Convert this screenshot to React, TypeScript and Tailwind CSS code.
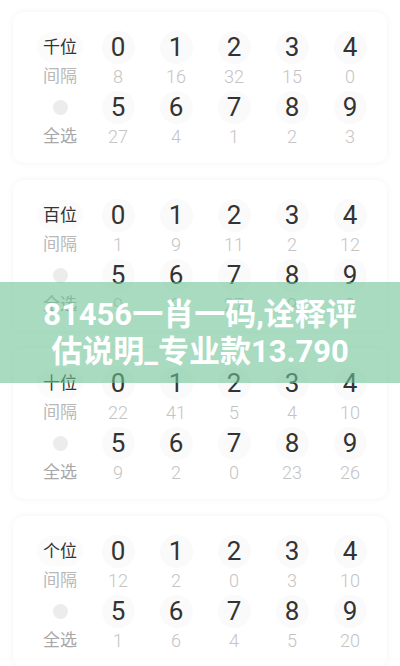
const cards = [
  { label: "千位", top: [8, 16, 32, 15, 0], bottom: [27, 4, 1, 2, 3] },
  { label: "百位", top: [1, 9, 11, 2, 12], bottom: [9, 2, 27, 9, 0] },
  { label: "十位", top: [22, 41, 5, 4, 10], bottom: [9, 2, 0, 23, 26] },
  { label: "个位", top: [12, 2, 0, 3, 10], bottom: [1, 6, 4, 5, 20] },
];

function Digit({ n }: { n: number }) {
  return (
    <div className="flex h-[30px] items-center justify-center">
      <span className="flex h-[33px] w-[33px] items-center justify-center rounded-full bg-[#fafafa] text-[26px] leading-none text-[#333]">
        {n}
      </span>
    </div>
  );
}

function Gap({ v }: { v: number }) {
  return (
    <div className="flex h-[30px] items-center justify-center text-[18px] font-light leading-none text-[#c4c4c4]">
      {v}
    </div>
  );
}

function Card({ label, top, bottom }: { label: string; top: number[]; bottom: number[] }) {
  return (
    <div className="h-[151px] rounded-[10px] bg-white pl-[18px] pr-[8px] pt-[20px] shadow-[0_0_6px_rgba(0,0,0,0.05)]">
      <div className="grid grid-cols-[58px_repeat(5,58px)]">
        <div className="flex h-[30px] items-center justify-center">
          <span className="rounded-full bg-[#fbfbfb] px-[6px] text-[17px] leading-[30px] text-[#333]">{label}</span>
        </div>
        {[0, 1, 2, 3, 4].map((n) => (
          <Digit key={n} n={n} />
        ))}
        <div className="flex h-[30px] items-center justify-center text-[17px] text-[#b8b8b8]">间隔</div>
        {top.map((v, i) => (
          <Gap key={i} v={v} />
        ))}
        <div className="flex h-[30px] items-center justify-center">
          <span className="h-[15px] w-[15px] rounded-full bg-[#ececec]" />
        </div>
        {[5, 6, 7, 8, 9].map((n) => (
          <Digit key={n} n={n} />
        ))}
        <div className="flex h-[30px] items-center justify-center text-[17px] text-[#a8a8a8]">全选</div>
        {bottom.map((v, i) => (
          <Gap key={i} v={v} />
        ))}
      </div>
    </div>
  );
}

export default function App() {
  return (
    <div
      className="relative h-[666px] w-[400px] overflow-hidden bg-white"
      style={{ fontFamily: 'Roboto, "Noto Sans CJK SC", sans-serif' }}
    >
      <div className="flex flex-col gap-[17px] px-[13px] pt-[12px]">
        {cards.map((c) => (
          <Card key={c.label} {...c} />
        ))}
      </div>
      <div className="absolute left-0 right-0 top-[282px] flex h-[101px] flex-col items-center justify-center bg-[rgba(110,195,150,0.6)] text-center text-[31px] font-bold leading-[37px] text-white">
        <div>81456一肖一码,诠释评</div>
        <div>估说明_专业款13.790</div>
      </div>
    </div>
  );
}
